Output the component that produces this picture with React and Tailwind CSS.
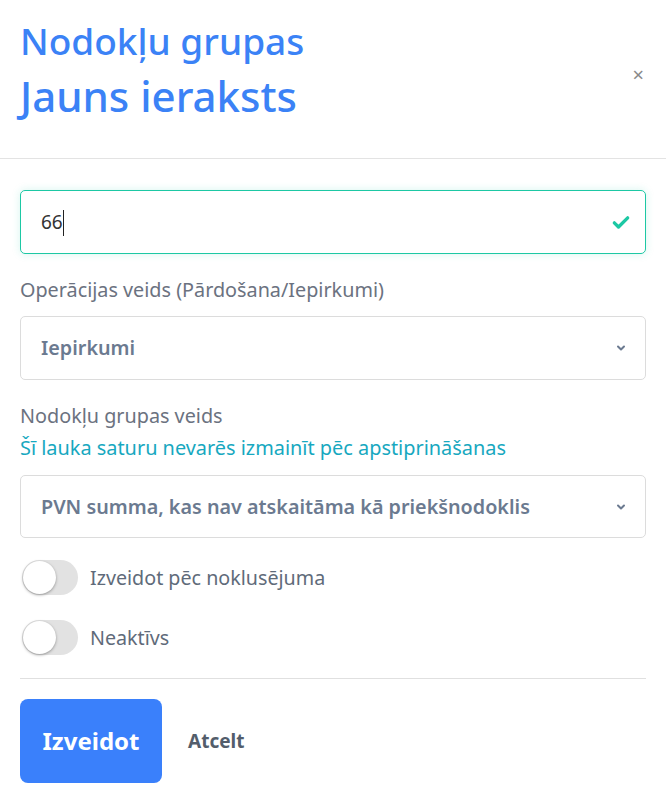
import React from "react";

const Toggle = ({ label }) => {
  return (
    <label className="flex items-center gap-3 cursor-pointer">
      <span className="relative inline-block w-[56px] h-[35px] rounded-full bg-[#e2e2e2] shrink-0">
        <span className="absolute left-[1px] top-[1px] w-[33px] h-[33px] rounded-full bg-white shadow-[0_1px_3px_rgba(0,0,0,0.35)]" />
      </span>
      <span className="text-[19.7px] text-[#5f6b7a]">{label}</span>
    </label>
  );
};

const Chevron = () => (
  <svg className="w-[12px] h-[12px] text-[#6b7a90]" viewBox="0 0 24 24" fill="none" stroke="currentColor" strokeWidth="4" strokeLinecap="round" strokeLinejoin="round">
    <path d="M6 9l6 6 6-6" />
  </svg>
);

const App = () => {
  return (
    <div className="min-h-screen bg-white font-['Noto_Sans',sans-serif]">
      {/* Header */}
      <header className="flex items-center justify-between pl-5 pr-[22px] pt-[19px] pb-[38px] border-b border-[#e3e3e3]">
        <div>
          <h3 className="text-[37px] leading-[44px] font-medium text-[#3b82f6]">Nodokļu grupas</h3>
          <h2 className="text-[42px] leading-[48px] font-medium mt-[9px] text-[#3b82f6]">Jauns ieraksts</h2>
        </div>
        <button className="text-[#8a8a8a] text-[20px] leading-none mt-[10px]">×</button>
      </header>

      {/* Form */}
      <div className="px-5 pt-[31px]">
        <div className="flex items-center h-[64px] pl-5 pr-[14px] rounded-[5px] border border-[#1dc8a4] shadow-[0_0_8px_rgba(29,200,164,0.18)]">
          <span className="flex-1 text-[19px] text-[#333]">
            66<span className="inline-block w-px h-[26px] bg-[#222] align-middle" />
          </span>
          <svg className="w-[20px] h-[20px] text-[#1dc8a4]" viewBox="0 0 24 24" fill="none" stroke="currentColor" strokeWidth="4" strokeLinecap="round" strokeLinejoin="round">
            <path d="M4 13l5 5L20 7" />
          </svg>
        </div>

        <div className="mt-[22px] text-[19.8px] leading-[28px] text-[#6b7280]">Operācijas veids (Pārdošana/Iepirkumi)</div>
        <div className="mt-[12px] flex items-center justify-between h-[64px] pl-5 pr-[18px] rounded-[5px] border border-[#dcdcdc]">
          <span className="text-[19.75px] font-semibold text-[#6b7a90]">Iepirkumi</span>
          <Chevron />
        </div>

        <div className="mt-[22px] text-[19.8px] leading-[28px] text-[#6b7280]">Nodokļu grupas veids</div>
        <div className="mt-[4px] text-[19.9px] leading-[28px] text-[#17a8c0]">Šī lauka saturu nevarēs izmainīt pēc apstiprināšanas</div>
        <div className="mt-[13px] flex items-center justify-between h-[63px] pl-5 pr-[18px] rounded-[5px] border border-[#dcdcdc]">
          <span className="text-[19.75px] font-semibold text-[#6b7a90]">PVN summa, kas nav atskaitāma kā priekšnodoklis</span>
          <Chevron />
        </div>

        <div className="mt-[22px] flex flex-col gap-[25px] pl-[2px]">
          <Toggle label="Izveidot pēc noklusējuma" />
          <Toggle label="Neaktīvs" />
        </div>

        <div className="mt-[23px] border-t border-[#e0e0e0]" />

        <div className="mt-[20px] flex items-center gap-[26px]">
          <button className="h-[84px] w-[142px] rounded-[8px] bg-[#3a80fb] text-white text-[24px] font-bold">Izveidot</button>
          <button className="text-[19px] font-bold text-[#535d6b]">Atcelt</button>
        </div>
      </div>
    </div>
  );
};

export default App;
